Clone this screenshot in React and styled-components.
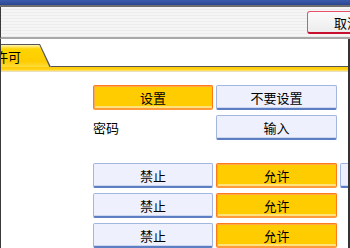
import { Fragment } from 'react';
import styled, { createGlobalStyle, css } from 'styled-components';

const GlobalStyle = createGlobalStyle`
    html, body {
        margin: 0;
        padding: 0;
        background: #fff;
    }
    body {
        font-family: "Noto Sans CJK SC", "Noto Sans", sans-serif;
    }
`;

const Screen = styled.div`
    width: 350px;
    height: 248px;
    overflow: hidden;
    display: flex;
    flex-direction: column;
    background: #fff;
`;

const TopBar = styled.div`
    flex-shrink: 0;
    height: 5px;
    background: linear-gradient(#3b5dad, #2a4690);
    border-bottom: 2px solid #6e6e6e;
`;

const Header = styled.div`
    flex-shrink: 0;
    box-sizing: border-box;
    height: 32px;
    padding-top: 4px;
    display: flex;
    justify-content: flex-end;
    align-items: flex-start;
    border-left: 1px solid #3a3a3a;
    border-bottom: 2px solid #a8a8a8;
    background: repeating-linear-gradient(#f5f5f5 0, #f5f5f5 2px, #ececec 2px, #ececec 3px);
`;

const CancelButton = styled.div`
    box-sizing: border-box;
    flex-shrink: 0;
    width: 80px;
    height: 23px;
    margin-right: -37px;
    display: flex;
    align-items: center;
    justify-content: center;
    font-size: 13px;
    color: #000;
    border: 1px solid #e8506a;
    border-bottom: 2px solid #c8102e;
    border-radius: 3px;
    background: linear-gradient(#fbfbfb, #ececec);
`;

const Main = styled.div`
    flex: 1;
    min-height: 0;
    overflow: hidden;
    border-left: 1px solid #3a3a3a;
    border-right: 2px solid #333;
`;

const TabRow = styled.div`
    display: flex;
    align-items: flex-end;
    padding-top: 5px;
`;

const Tab = styled.div`
    flex-shrink: 0;
    width: 50px;
    height: 23px;
    box-sizing: border-box;
    padding-top: 1px;
    background: #555;
    clip-path: polygon(0 0, 39px 0, 50px 100%, 0 100%);
`;

const TabFace = styled.div`
    height: 22px;
    display: flex;
    align-items: center;
    overflow: hidden;
    clip-path: polygon(0 0, 38.4px 0, 48.4px 100%, 0 100%);
    background: linear-gradient(#fff3b0 0, #ffd400 4px, #ffcc00 75%, #ffdc3c 100%);
`;

const TabLabel = styled.span`
    margin-left: -6px;
    font-size: 13px;
    color: #000;
    white-space: nowrap;
`;

const TabFiller = styled.div`
    flex: 1;
    height: 23px;
    box-sizing: border-box;
    border-bottom: 1px solid #555;
`;

const YellowBand = styled.div`
    height: 4px;
    background: linear-gradient(#ffcc00, #ffd21a 60%, #ffe680);
    border-bottom: 1px solid #e8e0c0;
`;

const Content = styled.div`
    padding: 13px 0 0 92px;
    display: flex;
    flex-direction: column;
    gap: 23px;
`;

const Section = styled.div`
    display: grid;
    grid-template-columns: 120px 121px 120px;
    grid-auto-rows: 25px;
    column-gap: 3px;
    row-gap: 5px;
`;

const Label = styled.div`
    display: flex;
    align-items: center;
    font-size: 13px;
    color: #000;
`;

const Button = styled.div`
    box-sizing: border-box;
    display: flex;
    align-items: center;
    justify-content: center;
    font-size: 13px;
    color: #000;
    border-radius: 2px;
    ${({ $selected }) => $selected ? css`
        background: #ffcc00;
        border: 1px solid #ff7a1a;
        border-bottom: 2px solid #ff9a3a;
        box-shadow: inset 1px 1px 0 #ffa84a, inset 0 -2px 0 #ffe27a;
    ` : css`
        background: #eef1fd;
        border: 1px solid #a3b6e0;
        border-bottom: 2px solid #5e7ec4;
        box-shadow: inset 0 -1px 0 #cdd8f0;
    `}
`;

const Spacer = styled.div``;

const permissionRows = [
    { id: 1, extra: true },
    { id: 2, extra: false },
    { id: 3, extra: false },
];

const App = () => (
    <>
        <GlobalStyle />
        <Screen>
            <TopBar />
            <Header>
                <CancelButton>取消</CancelButton>
            </Header>
            <Main>
                <TabRow>
                    <Tab>
                        <TabFace>
                            <TabLabel>许可</TabLabel>
                        </TabFace>
                    </Tab>
                    <TabFiller />
                </TabRow>
                <YellowBand />
                <Content>
                    <Section>
                        <Button $selected>设置</Button>
                        <Button>不要设置</Button>
                        <Spacer />
                        <Label>密码</Label>
                        <Button>输入</Button>
                        <Spacer />
                    </Section>
                    <Section>
                        {permissionRows.map((row) => (
                            <Fragment key={row.id}>
                                <Button>禁止</Button>
                                <Button $selected>允许</Button>
                                {row.extra ? <Button /> : <Spacer />}
                            </Fragment>
                        ))}
                    </Section>
                </Content>
            </Main>
        </Screen>
    </>
);

export default App;
